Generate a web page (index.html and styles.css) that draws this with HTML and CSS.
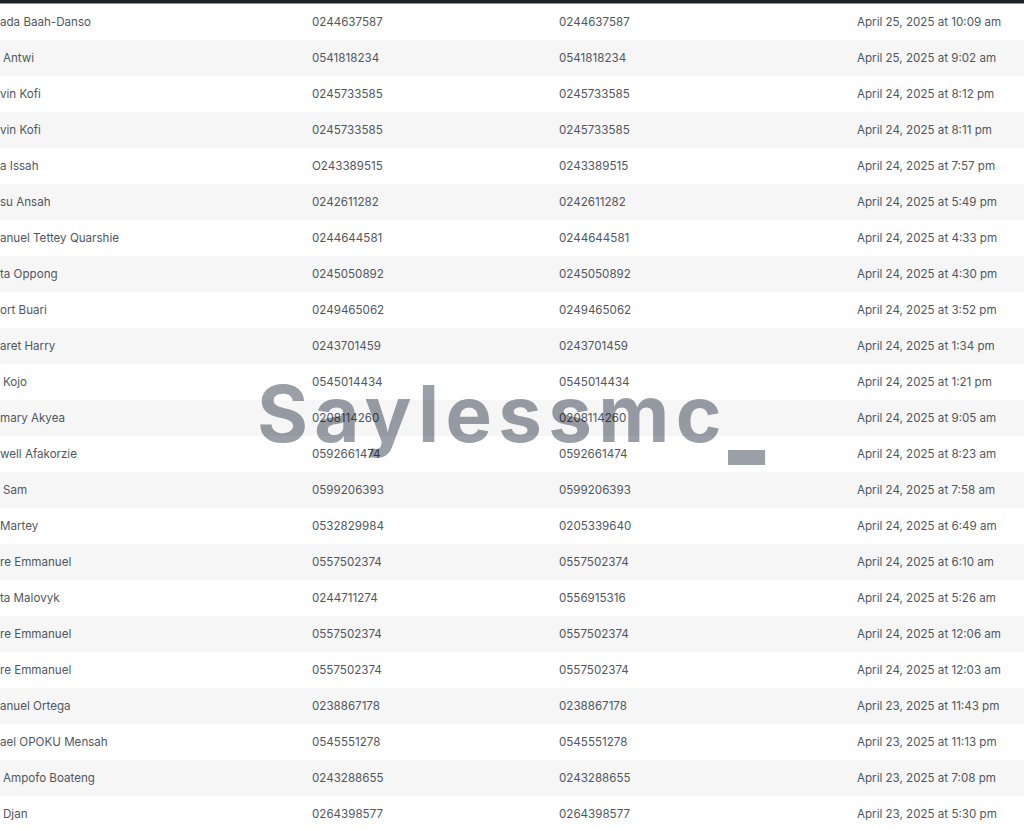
FILE: index.html
```html
<!DOCTYPE html>
<html lang="en">
<head>
<meta charset="utf-8">
<title>Entries</title>
<link rel="stylesheet" href="styles.css">
</head>
<body>
<div class="page">
  <div class="topbar"></div>
  <div class="table">
    <div class="row"><span class="name">ada Baah-Danso</span><span>0244637587</span><span>0244637587</span><span>April 25, 2025 at 10:09 am</span></div>
    <div class="row"><span class="name in">Antwi</span><span>0541818234</span><span>0541818234</span><span>April 25, 2025 at 9:02 am</span></div>
    <div class="row"><span class="name">vin Kofi</span><span>0245733585</span><span>0245733585</span><span>April 24, 2025 at 8:12 pm</span></div>
    <div class="row"><span class="name">vin Kofi</span><span>0245733585</span><span>0245733585</span><span>April 24, 2025 at 8:11 pm</span></div>
    <div class="row"><span class="name">a Issah</span><span>O243389515</span><span>0243389515</span><span>April 24, 2025 at 7:57 pm</span></div>
    <div class="row"><span class="name">su Ansah</span><span>0242611282</span><span>0242611282</span><span>April 24, 2025 at 5:49 pm</span></div>
    <div class="row"><span class="name">anuel Tettey Quarshie</span><span>0244644581</span><span>0244644581</span><span>April 24, 2025 at 4:33 pm</span></div>
    <div class="row"><span class="name">ta Oppong</span><span>0245050892</span><span>0245050892</span><span>April 24, 2025 at 4:30 pm</span></div>
    <div class="row"><span class="name">ort Buari</span><span>0249465062</span><span>0249465062</span><span>April 24, 2025 at 3:52 pm</span></div>
    <div class="row"><span class="name">aret Harry</span><span>0243701459</span><span>0243701459</span><span>April 24, 2025 at 1:34 pm</span></div>
    <div class="row"><span class="name in">Kojo</span><span>0545014434</span><span>0545014434</span><span>April 24, 2025 at 1:21 pm</span></div>
    <div class="row"><span class="name">mary Akyea</span><span>0208114260</span><span>0208114260</span><span>April 24, 2025 at 9:05 am</span></div>
    <div class="row"><span class="name">well Afakorzie</span><span>0592661474</span><span>0592661474</span><span>April 24, 2025 at 8:23 am</span></div>
    <div class="row"><span class="name in">Sam</span><span>0599206393</span><span>0599206393</span><span>April 24, 2025 at 7:58 am</span></div>
    <div class="row"><span class="name">Martey</span><span>0532829984</span><span>0205339640</span><span>April 24, 2025 at 6:49 am</span></div>
    <div class="row"><span class="name">re Emmanuel</span><span>0557502374</span><span>0557502374</span><span>April 24, 2025 at 6:10 am</span></div>
    <div class="row"><span class="name">ta Malovyk</span><span>0244711274</span><span>0556915316</span><span>April 24, 2025 at 5:26 am</span></div>
    <div class="row"><span class="name">re Emmanuel</span><span>0557502374</span><span>0557502374</span><span>April 24, 2025 at 12:06 am</span></div>
    <div class="row"><span class="name">re Emmanuel</span><span>0557502374</span><span>0557502374</span><span>April 24, 2025 at 12:03 am</span></div>
    <div class="row"><span class="name">anuel Ortega</span><span>0238867178</span><span>0238867178</span><span>April 23, 2025 at 11:43 pm</span></div>
    <div class="row"><span class="name">ael OPOKU Mensah</span><span>0545551278</span><span>0545551278</span><span>April 23, 2025 at 11:13 pm</span></div>
    <div class="row"><span class="name in">Ampofo Boateng</span><span>0243288655</span><span>0243288655</span><span>April 23, 2025 at 7:08 pm</span></div>
    <div class="row"><span class="name in">Djan</span><span>0264398577</span><span>0264398577</span><span>April 23, 2025 at 5:30 pm</span></div>
  </div>
  <div class="watermark">Saylessmc<span class="us">_</span></div>
</div>
</body>
</html>
```
FILE: styles.css
```css
html, body {
  margin: 0;
  padding: 0;
  background: #ffffff;
}
.page {
  position: relative;
  width: 1024px;
  height: 829px;
  overflow: hidden;
  font-family: Inter, "Noto Sans", sans-serif;
  font-size: 11.6px;
  color: #50575e;
}
.topbar {
  height: 3px;
  background: #1d2327;
  border-bottom: 1px solid #8c8f94;
}
.table {
  display: flex;
  flex-direction: column;
}
.row {
  display: grid;
  grid-template-columns: 312px 247px 298px 1fr;
  align-items: center;
  height: 36px;
  box-sizing: border-box;
  padding-bottom: 0;
  background: #ffffff;
}
.row:nth-child(even) {
  background: #f6f6f6;
}
.row span {
  white-space: nowrap;
}
.name.in {
  padding-left: 3px;
}
.watermark {
  position: absolute;
  left: 257px;
  top: 375px;
  font-family: Inter, "Noto Sans", sans-serif;
  font-weight: 700;
  font-size: 78px;
  line-height: 78px;
  letter-spacing: 6.3px;
  color: #9ba0a8;
  mix-blend-mode: multiply;
  pointer-events: none;
}
.us {
  display: inline-block;
  transform: translateY(9px) scaleY(1.7);
  transform-origin: 50% 88%;
}
```
